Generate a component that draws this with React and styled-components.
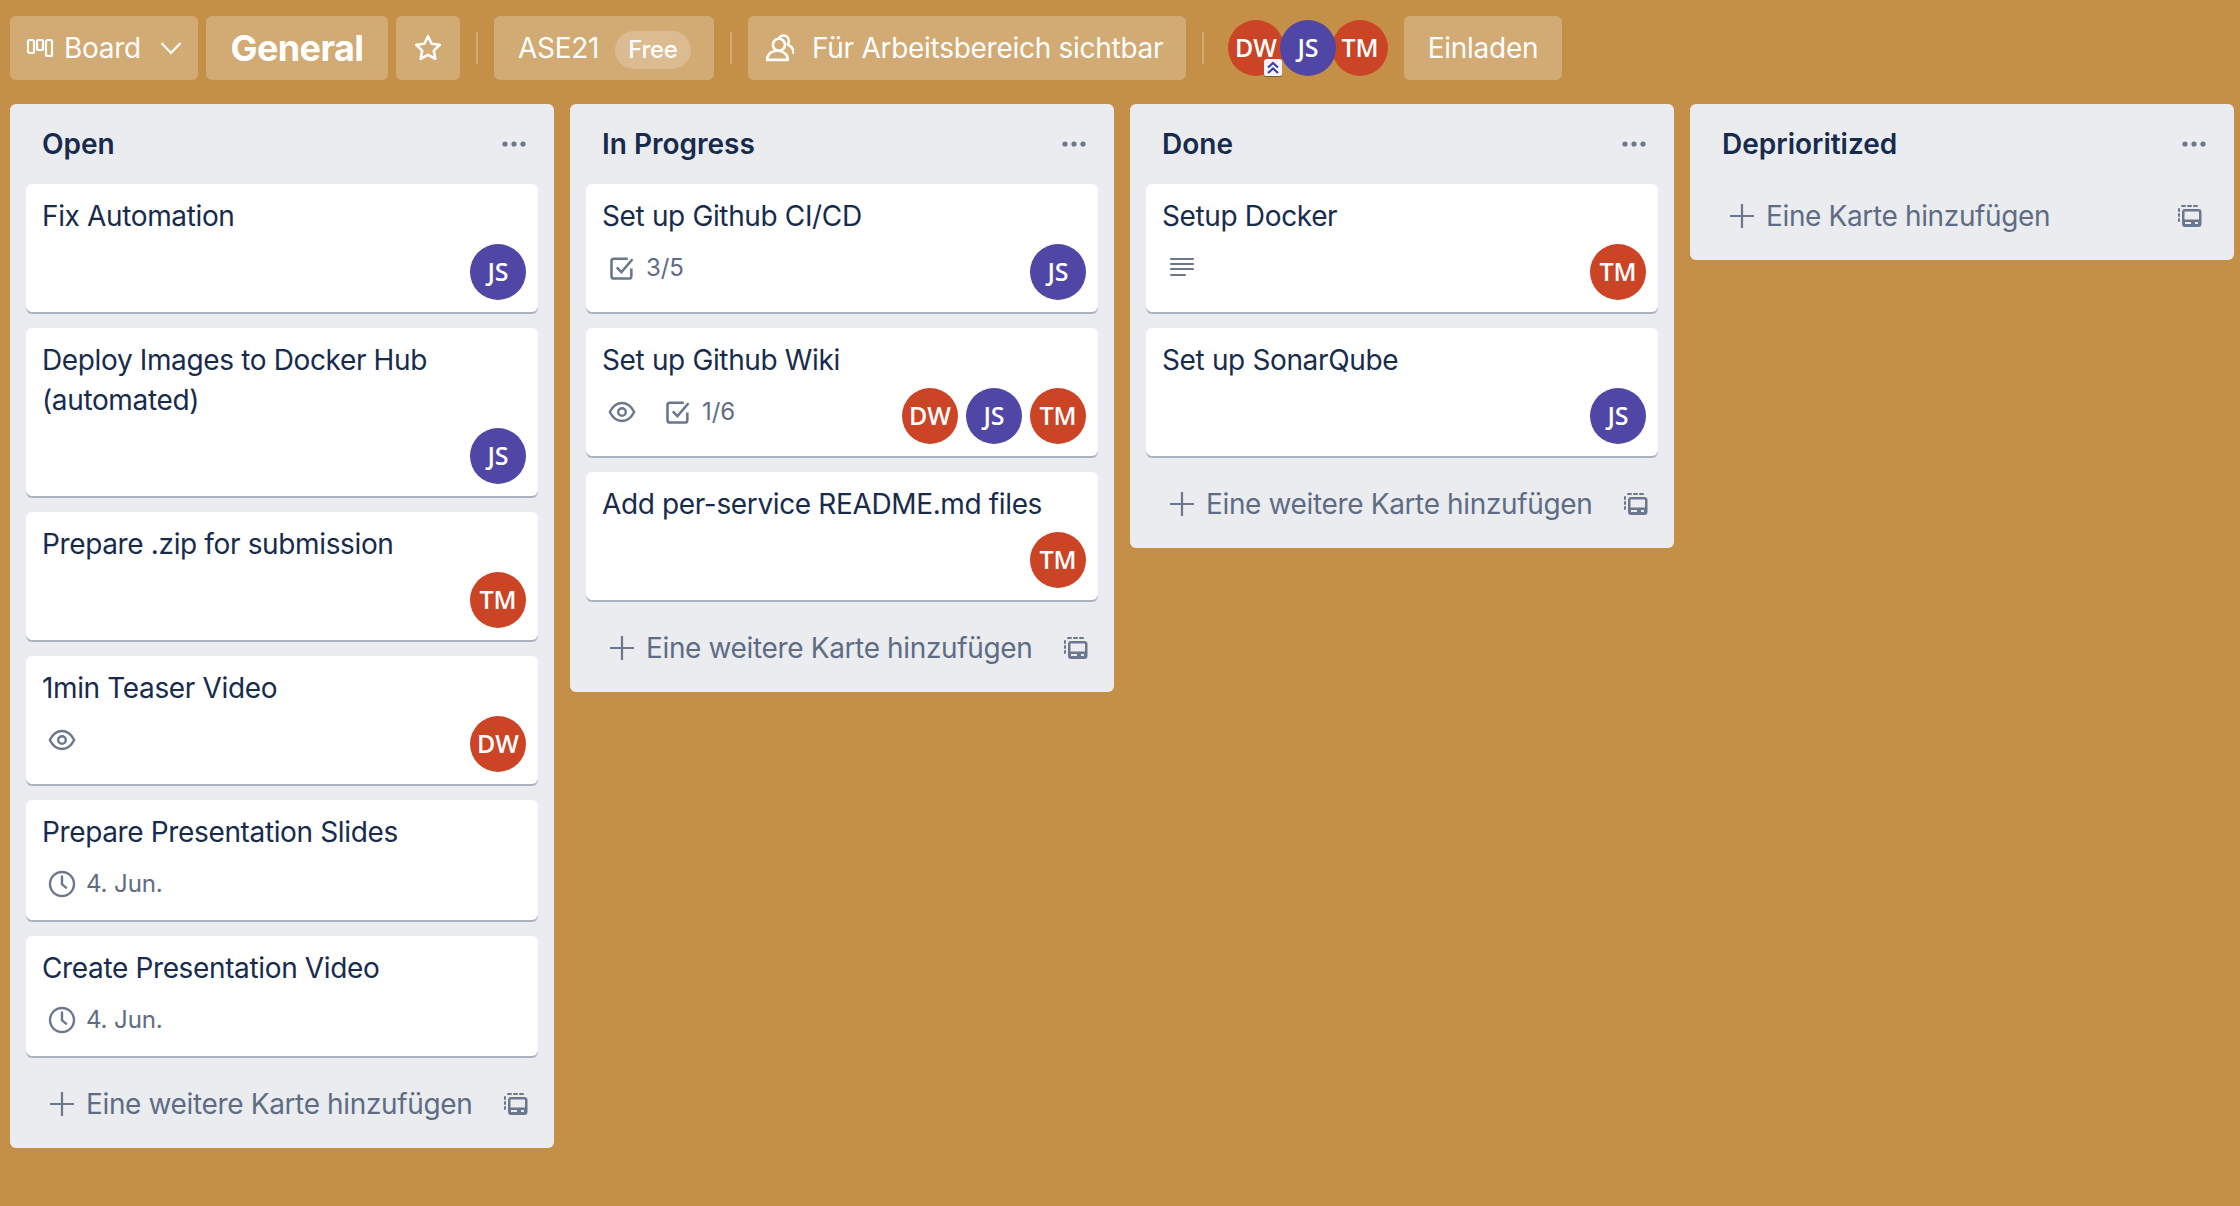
import styled, { createGlobalStyle } from "styled-components";

const GlobalStyle = createGlobalStyle`
  html, body {
    margin: 0;
    padding: 0;
    height: 100%;
    overflow: hidden;
    background: #c49047;
    font-family: Inter, "Liberation Sans", sans-serif;
  }
  * { box-sizing: border-box; }
`;

const Page = styled.div`
  min-height: 1206px;
  background: #c49047;
`;

// top bar
const Toolbar = styled.header`
  display: flex;
  align-items: center;
  height: 64px;
  margin: 16px 0 24px;
  padding-left: 10px;
`;

const BarButton = styled.div`
  display: flex;
  align-items: center;
  height: 64px;
  width: ${(props) => props.$width}px;
  margin-left: ${(props) => props.$gap || 0}px;
  padding: 0 ${(props) => props.$pad ?? 24}px;
  justify-content: ${(props) => (props.$center ? "center" : "flex-start")};
  background: rgba(255, 255, 255, 0.24);
  border-radius: 6px;
  color: #fff;
  font-size: 28px;
  line-height: 40px;
  letter-spacing: -0.28px;
  white-space: nowrap;
`;

const BarLabel = styled.span`
  display: flex;
  margin-left: ${(props) => props.$left}px;
`;

const BoardName = styled.span`
  font-size: 36px;
  font-weight: 700;
  letter-spacing: -0.6px;
`;

const Pill = styled.span`
  display: flex;
  align-items: center;
  height: 38px;
  margin-left: 16px;
  padding: 0 13px;
  border-radius: 19px;
  background: rgba(255, 255, 255, 0.2);
  font-size: 24px;
  font-weight: 500;
  position: relative;
  top: 2px;
`;

const Divider = styled.span`
  width: 2px;
  height: 32px;
  margin: 0 16px;
  background: rgba(255, 255, 255, 0.24);
`;

const BarAvatars = styled.div`
  display: flex;
  margin-left: 8px;
  margin-right: 16px;
`;

// board
const Board = styled.main`
  display: flex;
  align-items: flex-start;
  gap: 16px;
  padding-left: 10px;
`;

const Column = styled.section`
  width: 544px;
  padding-bottom: 12px;
  background: #ebecf0;
  border-radius: 6px;
`;

const ColumnHead = styled.div`
  display: flex;
  align-items: center;
  justify-content: space-between;
  height: 80px;
  padding: 0 28px 0 32px;
`;

const ColumnTitle = styled.h2`
  margin: 0;
  color: #172b4d;
  font-size: 28px;
  line-height: 40px;
  font-weight: 600;
`;

const CardList = styled.div`
  display: flex;
  flex-direction: column;
  gap: 16px;
  padding: 0 16px 16px;
`;

const Card = styled.article`
  padding: 12px 12px 0 16px;
  background: #fff;
  border-radius: 6px;
  box-shadow: 0 2px 0 rgba(9, 30, 66, 0.28);
`;

const CardTitle = styled.div`
  color: #172b4d;
  font-size: 28px;
  line-height: 40px;
  letter-spacing: -0.36px;
`;

const CardFooter = styled.div`
  display: flex;
  justify-content: space-between;
  align-items: flex-start;
  margin-top: 8px;
  padding-bottom: 12px;
`;

const DateFooter = styled.div`
  padding: 4px 0 16px;
  margin-top: 8px;
`;

const Badges = styled.div`
  display: flex;
  gap: 12px;
  padding-top: 4px;
`;

const Badge = styled.div`
  display: flex;
  align-items: center;
  height: 40px;
  color: #5e6c84;
  font-size: 24px;
  line-height: 40px;
  letter-spacing: -0.1px;
`;

const BadgeIcon = styled.span`
  display: flex;
  align-items: center;
  justify-content: center;
  width: 40px;
  height: 40px;
  margin-right: 4px;
`;

const Members = styled.div`
  display: flex;
  gap: 8px;
`;

const Avatar = styled.div`
  display: flex;
  align-items: center;
  justify-content: center;
  flex: none;
  width: 56px;
  height: 56px;
  padding-bottom: 2px;
  border-radius: 50%;
  background: ${(props) => (props.$who === "JS" ? "#5046a5" : "#cb4425")};
  color: #fff;
  font-family: "Open Sans", "Noto Sans", sans-serif;
  font-size: 25px;
  font-weight: 600;
  position: relative;
  z-index: ${(props) => (props.$who === "JS" ? 2 : 1)};
  margin-left: ${(props) => props.$overlap || 0}px;
`;

const AdminBadge = styled.span`
  position: absolute;
  right: 2px;
  bottom: 0;
  width: 18px;
  height: 17px;
  background: #f4f5fb;
  border-radius: 3px 3px 2px 2px;
  box-shadow: 0 1px 0 rgba(60, 50, 30, 0.55);
  display: flex;
  align-items: center;
  justify-content: center;
`;

const AddRow = styled.div`
  display: flex;
  align-items: center;
  justify-content: space-between;
  height: 64px;
  padding: 0 ${(props) => (props.$empty ? 32 : 26)}px 0 40px;
  color: #5e6c84;
  font-size: 28px;
  letter-spacing: -0.36px;
`;

const AddLabel = styled.span`
  display: flex;
  align-items: center;
  gap: 12px;
`;

// icons
const BoardIcon = () => (
  <svg width="28" height="20" viewBox="0 0 28 20" fill="none" stroke="#fff" strokeWidth="2.2">
    <rect x="2" y="2" width="6" height="13" rx="1.5" />
    <rect x="11" y="2" width="6" height="10" rx="1.5" />
    <rect x="20" y="2" width="6" height="16" rx="1.5" />
  </svg>
);

const Chevron = () => (
  <svg width="22" height="14" viewBox="0 0 22 14" fill="none" stroke="#fff" strokeWidth="2.2">
    <path d="M1.5 2 11 12 20.5 2" />
  </svg>
);

const StarIcon = () => (
  <svg width="30" height="30" viewBox="0 0 30 30" fill="none" stroke="#fff" strokeWidth="2.6" strokeLinejoin="round">
    <path d="M15 3.2l3.6 7.6 8.2 1.1-6 5.7 1.5 8.2-7.3-4-7.3 4 1.5-8.2-6-5.7 8.2-1.1z" />
  </svg>
);

const PeopleIcon = () => (
  <svg width="28" height="28" viewBox="1 0 26 26" fill="none" stroke="#fff" strokeWidth="2.4" strokeLinejoin="round" strokeLinecap="round">
    <circle cx="13" cy="10" r="5.6" />
    <path d="M2 24c0-5.5 4.5-8.4 9.5-8.4s9.8 2.9 9.8 8.4z" />
    <path d="M13 4.2C13.8 2.4 15.4 1.4 17.2 1.4c3 0 5 2.3 5 5 0 1.3-.4 2.4-1.1 3.3 3.2 1.6 5.4 4.2 5.4 7.8" />
  </svg>
);

const EyeIcon = () => (
  <svg width="28" height="22" viewBox="0 0 28 22" fill="none" stroke="#6b778c" strokeWidth="2.4">
    <path d="M1.8 11C5 4.8 9.2 2 14 2s9 2.8 12.2 9C23 17.2 18.8 20 14 20S5 17.2 1.8 11z" />
    <circle cx="14" cy="11" r="3.8" />
  </svg>
);

const CheckIcon = () => (
  <svg width="28" height="28" viewBox="0 0 24 24" fill="none" stroke="#6b778c" strokeWidth="2.2">
    <path d="M20 12.5V19a2 2 0 0 1-2 2H5a2 2 0 0 1-2-2V6a2 2 0 0 1 2-2h12" strokeLinejoin="round" />
    <path d="M7.5 11.5l4 4L21 4.5" />
  </svg>
);

const ClockIcon = () => (
  <svg width="28" height="28" viewBox="0 0 28 28" fill="none" stroke="#6b778c" strokeWidth="2.4">
    <circle cx="14" cy="14" r="12" />
    <path d="M14 6.5v7.8l4 3.4" strokeLinecap="round" />
  </svg>
);

const LinesIcon = () => (
  <svg width="24" height="22" viewBox="0 0 24 22" fill="#6b778c">
    <rect x="0" y="1" width="24" height="2" rx="1" />
    <rect x="0" y="6" width="24" height="2" rx="1" />
    <rect x="0" y="11" width="24" height="2" rx="1" />
    <rect x="0" y="17" width="16" height="2" rx="1" />
  </svg>
);

const PlusIcon = () => (
  <svg width="24" height="24" viewBox="0 0 24 24" stroke="#6b778c" strokeWidth="2.2">
    <path d="M12 0v24M0 12h24" />
  </svg>
);

const DotsIcon = () => (
  <svg width="24" height="6" viewBox="0 0 24 6" fill="#6b778c">
    <circle cx="3" cy="3" r="2.6" />
    <circle cx="12" cy="3" r="2.6" />
    <circle cx="21" cy="3" r="2.6" />
  </svg>
);

const TemplateIcon = () => (
  <svg width="24" height="24" viewBox="0 0 24 24" fill="none">
    <path d="M1 5v2M1 10v2M1 15v2M4 2h3M10 2h3M16 2h3" stroke="#6b778c" strokeWidth="2" strokeLinecap="round" />
    <rect x="4" y="5" width="19.5" height="18" rx="3" fill="#6b778c" />
    <rect x="6.5" y="7.5" width="14.5" height="8" fill="#ebecf0" />
    <rect x="7" y="18" width="6" height="2" fill="#ebecf0" />
    <rect x="17" y="18" width="3" height="2" fill="#ebecf0" />
  </svg>
);

const AdminIcon = () => (
  <svg width="14" height="14" viewBox="0 0 14 14" fill="none" stroke="#3c3fa8" strokeWidth="2.2">
    <path d="M2 6.5 7 2l5 4.5M2 12l5-4.5 5 4.500" />
  </svg>
);

const columns = [
  {
    title: "Open",
    cards: [
      { title: "Fix Automation", members: ["JS"] },
      { title: "Deploy Images to Docker Hub (automated)", members: ["JS"] },
      { title: "Prepare .zip for submission", members: ["TM"] },
      { title: "1min Teaser Video", members: ["DW"], eye: true },
      { title: "Prepare Presentation Slides", date: "4. Jun." },
      { title: "Create Presentation Video", date: "4. Jun." },
    ],
  },
  {
    title: "In Progress",
    cards: [
      { title: "Set up Github CI/CD", members: ["JS"], check: "3/5" },
      { title: "Set up Github Wiki", members: ["DW", "JS", "TM"], eye: true, check: "1/6" },
      { title: "Add per-service README.md files", members: ["TM"] },
    ],
  },
  {
    title: "Done",
    cards: [
      { title: "Setup Docker", members: ["TM"], lines: true },
      { title: "Set up SonarQube", members: ["JS"] },
    ],
  },
  { title: "Deprioritized", cards: [] },
];

const TaskCard = ({ card }) => (
  <Card>
    <CardTitle>{card.title}</CardTitle>
    {card.date ? (
      <DateFooter>
        <Badge>
          <BadgeIcon>
            <ClockIcon />
          </BadgeIcon>
          {card.date}
        </Badge>
      </DateFooter>
    ) : (
      <CardFooter>
        <Badges>
          {card.eye && (
            <Badge>
              <BadgeIcon>
                <EyeIcon />
              </BadgeIcon>
            </Badge>
          )}
          {card.check && (
            <Badge>
              <BadgeIcon>
                <CheckIcon />
              </BadgeIcon>
              {card.check}
            </Badge>
          )}
          {card.lines && (
            <Badge>
              <BadgeIcon>
                <LinesIcon />
              </BadgeIcon>
            </Badge>
          )}
        </Badges>
        <Members>
          {card.members.map((who) => (
            <Avatar key={who} $who={who}>
              {who}
            </Avatar>
          ))}
        </Members>
      </CardFooter>
    )}
  </Card>
);

const App = () => (
  <Page>
    <GlobalStyle />
    <Toolbar>
      <BarButton $width={188} $pad={16}>
        <BoardIcon />
        <BarLabel $left={10}>Board</BarLabel>
        <BarLabel $left={19}>
          <Chevron />
        </BarLabel>
      </BarButton>
      <BarButton $width={182} $gap={8} $pad={0} $center>
        <BoardName>General</BoardName>
      </BarButton>
      <BarButton $width={64} $gap={8} $pad={0} $center>
        <StarIcon />
      </BarButton>
      <Divider />
      <BarButton $width={220} $pad={24}>
        ASE21
        <Pill>Free</Pill>
      </BarButton>
      <Divider />
      <BarButton $width={438} $pad={18}>
        <PeopleIcon />
        <BarLabel $left={18}>Für Arbeitsbereich sichtbar</BarLabel>
      </BarButton>
      <Divider />
      <BarAvatars>
        <Avatar $who="DW">
          DW
          <AdminBadge>
            <AdminIcon />
          </AdminBadge>
        </Avatar>
        <Avatar $who="JS" $overlap={-4}>
          JS
        </Avatar>
        <Avatar $who="TM" $overlap={-4}>
          TM
        </Avatar>
      </BarAvatars>
      <BarButton $width={158} $pad={0} $center>
        Einladen
      </BarButton>
    </Toolbar>
    <Board>
      {columns.map((col) => (
        <Column key={col.title}>
          <ColumnHead>
            <ColumnTitle>{col.title}</ColumnTitle>
            <DotsIcon />
          </ColumnHead>
          {col.cards.length > 0 && (
            <CardList>
              {col.cards.map((card) => (
                <TaskCard key={card.title} card={card} />
              ))}
            </CardList>
          )}
          <AddRow $empty={col.cards.length === 0}>
            <AddLabel>
              <PlusIcon />
              {col.cards.length === 0 ? "Eine Karte hinzufügen" : "Eine weitere Karte hinzufügen"}
            </AddLabel>
            <TemplateIcon />
          </AddRow>
        </Column>
      ))}
    </Board>
  </Page>
);

export default App;
